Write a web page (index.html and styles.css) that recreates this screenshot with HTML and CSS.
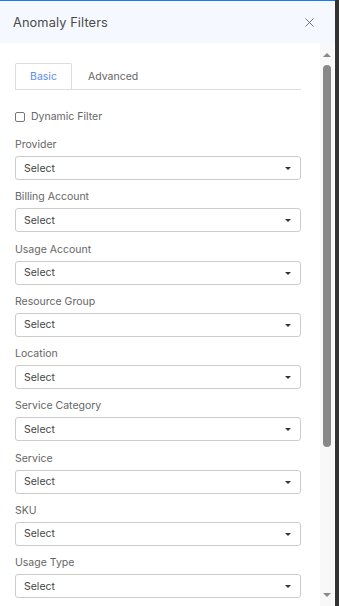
FILE: index.html
```html
<!DOCTYPE html>
<html>
<head>
<meta charset="utf-8">
<link rel="stylesheet" href="styles.css">
</head>
<body>
<div class="frame">
  <div class="panel">
    <div class="header">
      <div class="title">Anomaly Filters</div>
      <svg class="close" width="9" height="9" viewBox="0 0 9 9"><path d="M0.5 0.5 L8.5 8.5 M8.5 0.5 L0.5 8.5" stroke="#666" stroke-width="0.9" fill="none"/></svg>
    </div>
    <div class="body">
      <div class="content">
        <div class="tabs">
          <div class="tab active">Basic</div>
          <div class="tab">Advanced</div>
        </div>
        <label class="check"><span class="box"></span>Dynamic Filter</label>
        <div class="field"><div class="label">Provider</div><div class="select"><span>Select</span><i class="caret"></i></div></div>
        <div class="field"><div class="label">Billing Account</div><div class="select"><span>Select</span><i class="caret"></i></div></div>
        <div class="field"><div class="label">Usage Account</div><div class="select"><span>Select</span><i class="caret"></i></div></div>
        <div class="field"><div class="label">Resource Group</div><div class="select"><span>Select</span><i class="caret"></i></div></div>
        <div class="field"><div class="label">Location</div><div class="select"><span>Select</span><i class="caret"></i></div></div>
        <div class="field"><div class="label">Service Category</div><div class="select"><span>Select</span><i class="caret"></i></div></div>
        <div class="field"><div class="label">Service</div><div class="select"><span>Select</span><i class="caret"></i></div></div>
        <div class="field"><div class="label">SKU</div><div class="select"><span>Select</span><i class="caret"></i></div></div>
        <div class="field"><div class="label">Usage Type</div><div class="select"><span>Select</span><i class="caret"></i></div></div>
      </div>
      <div class="scrollbar">
        <i class="arrow up"></i>
        <div class="thumb"></div>
        <div class="spacer"></div>
        <i class="arrow down"></i>
      </div>
    </div>
  </div>
  <div class="edge"></div>
</div>
</body>
</html>
```
FILE: styles.css
```css
html, body {
  margin: 0;
  padding: 0;
  height: 100%;
  overflow: hidden;
  background: #fff;
}
body {
  font-family: Inter, "Open Sans", sans-serif;
  color: #555;
}
.frame {
  display: flex;
  height: 606px;
}
.panel {
  width: 335px;
  display: flex;
  flex-direction: column;
  border-top: 1px solid #1a7cf0;
  box-sizing: border-box;
}
.edge {
  width: 4px;
  background: #333;
}
.header {
  height: 42px;
  background: #f5f9ff;
  display: flex;
  align-items: center;
  justify-content: space-between;
  padding: 0 21px 0 13px;
  flex: none;
}
.title {
  font-size: 12.8px;
  color: #4a4a4a;
  letter-spacing: 0.1px;
}
.close { display: block; }
.body {
  flex: 1;
  display: flex;
  overflow: hidden;
}
.content {
  width: 286px;
  padding: 20px 19px 0 15px;
}
.tabs {
  display: flex;
  border-bottom: 1px solid #ddd;
  height: 26px;
}
.tab {
  font-size: 10.5px;
  color: #666;
  display: flex;
  align-items: center;
  padding: 0 16px;
}
.tab.active {
  color: #5b8def;
  border: 1px solid #ddd;
  border-bottom: none;
  border-radius: 2px 2px 0 0;
  width: 57px;
  box-sizing: border-box;
  justify-content: center;
  padding: 0;
}
.check {
  display: flex;
  align-items: center;
  font-size: 10.5px;
  color: #666;
  margin-top: 20px;
  height: 13px;
}
.box {
  width: 8px;
  height: 8px;
  border: 1px solid #777;
  border-radius: 2px;
  margin-right: 6px;
}
.field {
  margin-top: 15px;
}
.field + .field { margin-top: 10.25px; }
.label {
  font-size: 10.5px;
  color: #666;
  height: 14px;
  line-height: 14px;
  margin-bottom: 4px;
}
.select {
  height: 24px;
  border: 1px solid #ccc;
  border-radius: 3px;
  box-sizing: border-box;
  display: flex;
  align-items: center;
  justify-content: space-between;
  padding: 0 9px 0 8px;
  font-size: 10.5px;
  color: #444;
}
.caret {
  width: 0;
  height: 0;
  border-left: 3px solid transparent;
  border-right: 3px solid transparent;
  border-top: 3px solid #333;
  margin-top: 1px;
}
.scrollbar {
  width: 14px;
  background: #f8f8f8;
  display: flex;
  flex-direction: column;
  align-items: center;
}
.arrow {
  width: 0;
  height: 0;
  border-left: 4px solid transparent;
  border-right: 4px solid transparent;
}
.arrow.up {
  border-bottom: 4px solid #888;
  margin-top: 10px;
}
.thumb {
  width: 8px;
  height: 382px;
  background: #888;
  border-radius: 4px;
  margin-top: 8px;
}
.spacer { flex: 1; }
.arrow.down {
  border-top: 4px solid #888;
  margin-bottom: 9px;
}
```
